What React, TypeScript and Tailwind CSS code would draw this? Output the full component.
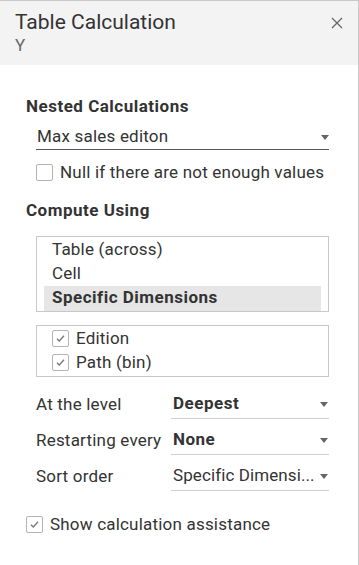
import React from "react";

const Caret = () => (
  <svg width="8" height="5" viewBox="0 0 8 5" className="shrink-0">
    <path d="M0 0 H8 L4 5 Z" fill="#666" />
  </svg>
);

const Check = ({ checked }: { checked: boolean }) => (
  <span className="w-[17px] h-[17px] border border-[#b4b4b4] rounded-[2px] bg-white flex items-center justify-center shrink-0">
    {checked && (
      <svg width="11" height="11" viewBox="0 0 11 11">
        <path d="M2 5.8 L4.3 8 L9 2.8" fill="none" stroke="#777" strokeWidth="1.3" />
      </svg>
    )}
  </span>
);

const Row = ({ label, value, bold }: { label: string; value: string; bold?: boolean }) => (
  <div className="flex h-[36px] pt-[8px]">
    <div className="w-[135px] flex items-center text-[17px] tracking-[0.2px] text-[#333] whitespace-nowrap">{label}</div>
    <div className="flex-1 min-w-0 flex items-center justify-between border-b border-[#cfcfcf] pl-[2px] pr-[1px]">
      <span
        className={`text-[17px] text-[#333] whitespace-nowrap ${
          bold ? "font-bold tracking-[0.5px]" : "tracking-[0.1px]"
        }`}
      >
        {value}
      </span>
      <span className="ml-[4px] flex items-center">
        <Caret />
      </span>
    </div>
  </div>
);

export default function App() {
  return (
    <div
      className="w-[359px] h-[565px] bg-white border-t border-r border-[#c8c8c8] overflow-hidden"
      style={{ fontFamily: "Roboto, 'Noto Sans', sans-serif" }}
    >
      <div className="bg-[#f3f3f3] h-[64px] pl-[15px] pr-[14px] pt-[7px] flex justify-between">
        <div>
          <div className="text-[21px] leading-[28px] text-[#333]">Table Calculation</div>
          <div className="text-[17px] leading-[18px] text-[#666]">Y</div>
        </div>
        <svg width="12" height="12" viewBox="0 0 12 12" className="mt-[9px] mr-[1px]">
          <path d="M1 1 L11 11 M11 1 L1 11" stroke="#666" strokeWidth="1.3" />
        </svg>
      </div>

      <div className="pl-[26px] pr-[29px]">
        <div className="pt-[31px] text-[17px] leading-[20px] font-bold tracking-[0.5px] text-[#333]">Nested Calculations</div>
        <div className="ml-[10px] mt-[11px] h-[23px] flex items-center justify-between border-b border-[#555] pl-[1px] pb-[2px]">
          <span className="text-[17px] tracking-[0.2px] text-[#333]">Max sales editon</span>
          <Caret />
        </div>
        <div className="ml-[10px] mt-[10px] flex items-center gap-[7px]">
          <Check checked={false} />
          <span className="text-[17px] tracking-[0.2px] text-[#333]">Null if there are not enough values</span>
        </div>
        <div className="mt-[14px] text-[17px] leading-[20px] font-bold tracking-[0.5px] text-[#333]">Compute Using</div>

        <div className="ml-[10px] mt-[16px] border border-[#c8c8c8] h-[76px] pt-[1px] px-[7px]">
          <div className="pl-[8px] h-[24px] flex items-center text-[17px] tracking-[0.2px] text-[#333]">Table (across)</div>
          <div className="pl-[8px] h-[24px] flex items-center text-[17px] tracking-[0.2px] text-[#333]">Cell</div>
          <div className="pl-[8px] h-[25px] flex items-center text-[17px] font-bold tracking-[0.5px] text-[#333] bg-[#e6e6e6]">
            Specific Dimensions
          </div>
        </div>

        <div className="ml-[10px] mt-[13px] border border-[#c8c8c8] h-[52px] pl-[15px] pt-[1px]">
          <div className="h-[24px] flex items-center gap-[7px]">
            <Check checked />
            <span className="text-[17px] tracking-[0.2px] text-[#333]">Edition</span>
          </div>
          <div className="h-[24px] flex items-center gap-[7px]">
            <Check checked />
            <span className="text-[17px] tracking-[0.2px] text-[#333]">Path (bin)</span>
          </div>
        </div>

        <div className="ml-[10px] mt-[6px]">
          <Row label="At the level" value="Deepest" bold />
          <Row label="Restarting every" value="None" bold />
          <Row label="Sort order" value="Specific Dimensi..." />
        </div>

        <div className="mt-[21px] flex items-center gap-[7px]">
          <Check checked />
          <span className="text-[17px] tracking-[0.2px] text-[#333]">Show calculation assistance</span>
        </div>
      </div>
    </div>
  );
}
